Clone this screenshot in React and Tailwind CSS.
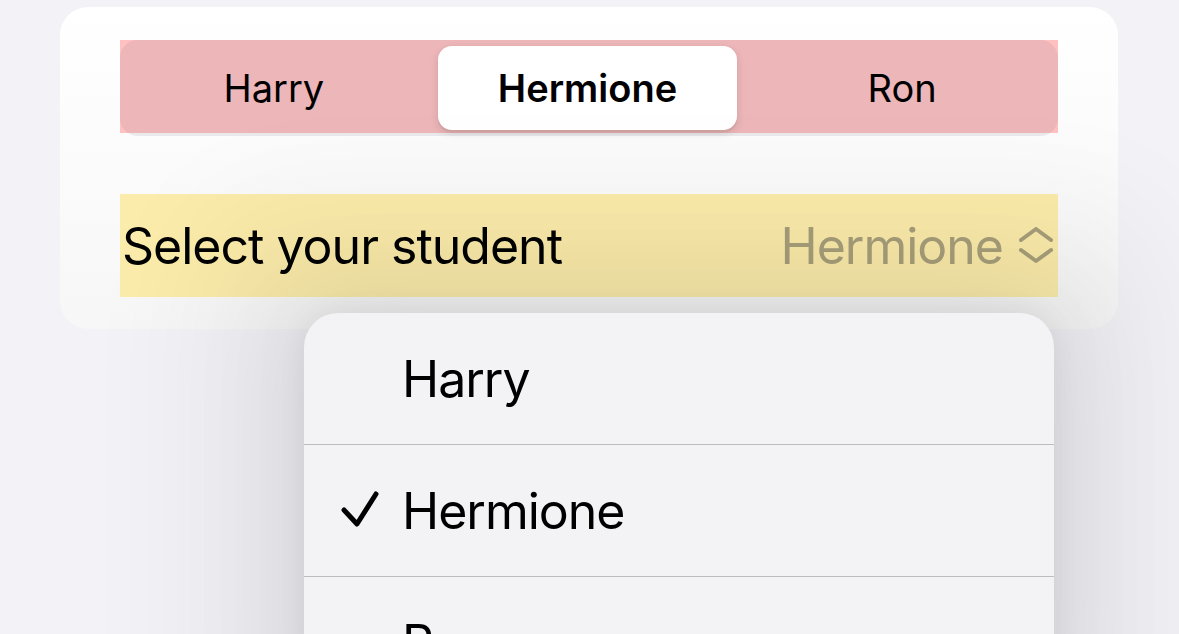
import React from "react";

function Check() {
  return (
    <svg width="40" height="40" viewBox="0 0 40 40" className="block">
      <path d="M4 19 L17 33 L36 3" fill="none" stroke="#000" strokeWidth="5" strokeLinecap="round" strokeLinejoin="round" />
    </svg>
  );
}

function UpDown() {
  return (
    <svg width="34" height="38" viewBox="0 0 34 38" className="block">
      <path d="M2 13 L17 2 L32 13" fill="none" stroke="#a89f7a" strokeWidth="4" strokeLinecap="round" strokeLinejoin="round" />
      <path d="M2 23 L17 34 L32 23" fill="none" stroke="#a89f7a" strokeWidth="4" strokeLinecap="round" strokeLinejoin="round" />
    </svg>
  );
}

export default function App() {
  return (
    <div
      className="relative w-[1179px] h-[634px] overflow-hidden bg-[#f2f2f7] text-black"
      style={{ fontFamily: "Inter, 'Noto Sans', sans-serif" }}
    >
      <div className="pt-[7px] pl-[60px]">
        <div className="w-[1058px] h-[322px] rounded-[28px] bg-gradient-to-b from-white to-[#f7f7f7] pt-[33px] px-[60px]">
          <div className="relative h-[96px]">
            <div className="absolute top-0 left-0 right-0 h-[93px] bg-[#ffc0c0]" />
            <div className="relative h-[96px] rounded-[18px] bg-[rgba(118,118,128,0.13)] p-[6px] flex items-stretch text-[38px] leading-none">
              <div className="w-[296px] flex items-center justify-center">Harry</div>
              <div className="ml-[16px] w-[300px] rounded-[14px] bg-white shadow-[0_3px_8px_rgba(0,0,0,0.12),0_3px_1px_rgba(0,0,0,0.04)] flex items-center justify-center font-semibold">
                Hermione
              </div>
              <div className="ml-[15px] w-[300px] flex items-center justify-center">Ron</div>
            </div>
          </div>
          <div className="mt-[58px] h-[103px] bg-[#fbecab] flex items-center justify-between pl-[2px] pr-[5px] text-[50px] tracking-[-1px] leading-none">
            <span>Select your student</span>
            <span className="flex items-center gap-[16px] text-[#a89f7a]">
              <span>Hermione</span>
              <UpDown />
            </span>
          </div>
        </div>
      </div>

      <div className="absolute left-[304px] top-[313px] w-[750px] h-[400px] rounded-[34px] bg-[#f3f3f6] shadow-[0_0_30px_rgba(0,0,0,0.06),0_0_100px_20px_rgba(0,0,0,0.08),0_0_120px_120px_rgba(0,0,0,0.045)] text-[50px] tracking-[-1px] leading-none">
        <div className="h-[131px] flex items-center pl-[98px]">Harry</div>
        <div className="h-px bg-[#bcbcc0]" />
        <div className="h-[131px] flex items-center pl-[36px]">
          <span className="w-[62px]"><Check /></span>
          <span>Hermione</span>
        </div>
        <div className="h-px bg-[#bcbcc0]" />
        <div className="h-[131px] flex items-center pl-[98px]">Ron</div>
      </div>
    </div>
  );
}
